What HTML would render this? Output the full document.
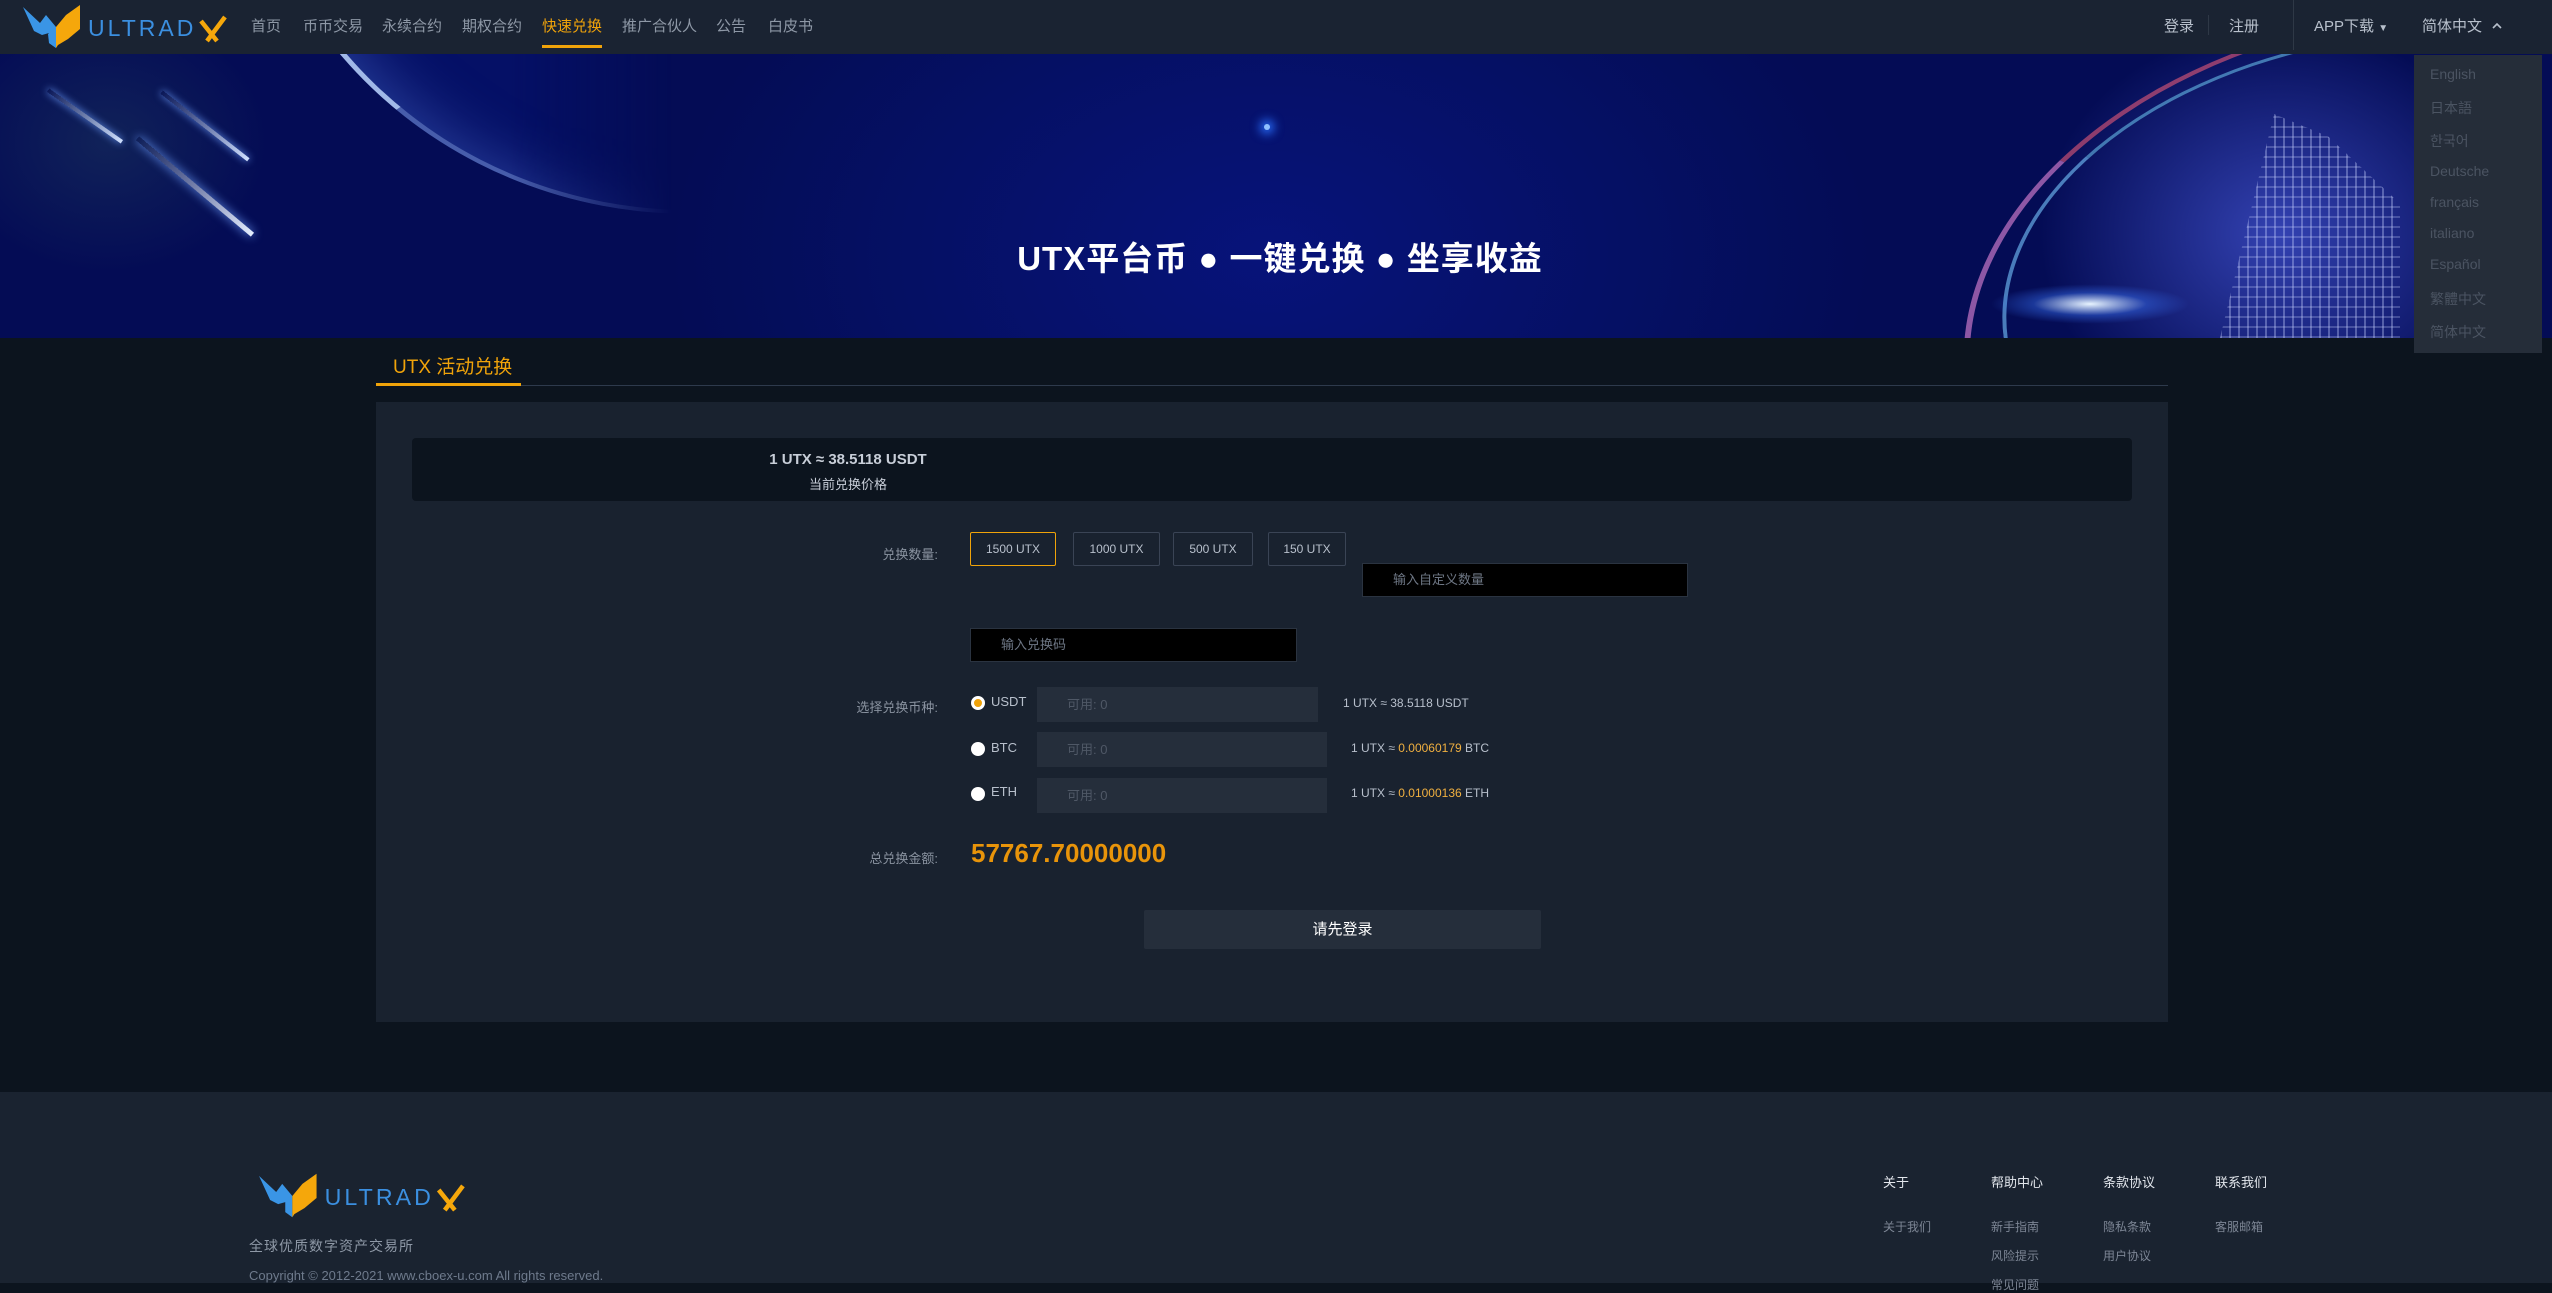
<!DOCTYPE html>
<html><head><meta charset="utf-8">
<style>
*{margin:0;padding:0;box-sizing:border-box}
body{width:2552px;height:1283px;overflow:hidden;background:#0c141e;font-family:"Liberation Sans","Noto Sans CJK SC",sans-serif;position:relative}
.a{position:absolute;white-space:nowrap}
.hdr{position:absolute;left:0;top:0;width:2552px;height:54px;background:#1a2332}
.nav{top:15px;font-size:15px;color:#8e98a6}
.banner{position:absolute;left:0;top:54px;width:2552px;height:284px;overflow:hidden;
background:radial-gradient(ellipse 600px 400px at 1270px 200px,#07137a 0%,#051064 60%,#040c55 100%)}
.dd{position:absolute;left:2414px;top:55px;width:128px;height:298px;background:#252d39}
.dd div{position:absolute;left:16px;font-size:14px;color:#4b5462}
.card{position:absolute;left:376px;top:402px;width:1792px;height:620px;background:#19222f}
.lbl{font-size:13px;color:#8a93a0;text-align:right;width:200px}
.btn{position:absolute;top:532px;height:34px;border:1px solid #3a4455;border-radius:2px;color:#b8c0cc;font-size:12px;text-align:center;line-height:32px}
.inp{position:absolute;background:#000;border:1px solid #2a3340;color:#6e7785;font-size:13px;padding-left:30px}
.av{position:absolute;left:1037px;background:#252e3b;color:#4f5866;font-size:13px;padding-left:30px;line-height:35px;height:35px}
.rad{position:absolute;width:14px;height:14px;border-radius:50%;background:#fff;left:971px}
.cur{font-size:13px;color:#b8c0cc}
.rate{font-size:12px;color:#b8c0cc}
.foot{position:absolute;left:0;top:1092px;width:2552px;height:191px;background:#1a2330}
.fh{font-size:13px;color:#e2e6ec;top:1172px}
.fl{font-size:12px;color:#7d8695}
</style></head><body>
<div class="hdr"></div>
<svg class="a" style="left:22px;top:3px" width="210" height="46" viewBox="0 0 210 46">
<polygon points="1,4 18,20 24,12 34,24 34,45 27,40 27,30 20,32 12,28" fill="#3a95e6"/>
<polygon points="34,24 44,12 58,2 58,26 46,36 36,42 34,45" fill="#f5a70b"/>
<polygon points="26,31 34,24 34,45 27,40" fill="#3a95e6"/>
<text x="66" y="33" font-family="Liberation Sans" font-size="23" fill="#3b8fe0" letter-spacing="3">ULTRAD</text>
<path d="M179 18 L195 38 M203 14 L185 38" stroke="#f5a70b" stroke-width="4.5" fill="none"/>
</svg>
<div class="a nav" style="left:251px">首页</div>
<div class="a nav" style="left:303px">币币交易</div>
<div class="a nav" style="left:382px">永续合约</div>
<div class="a nav" style="left:462px">期权合约</div>
<div class="a nav" style="left:542px;color:#f0a30a">快速兑换</div>
<div class="a" style="left:542px;top:45px;width:60px;height:3px;background:#f0a30a"></div>
<div class="a nav" style="left:622px">推广合伙人</div>
<div class="a nav" style="left:716px">公告</div>
<div class="a nav" style="left:768px">白皮书</div>
<div class="a nav" style="left:2164px;color:#b8c0cc">登录</div>
<div class="a" style="left:2208px;top:15px;width:1px;height:20px;background:#2e3846"></div>
<div class="a nav" style="left:2229px;color:#b8c0cc">注册</div>
<div class="a" style="left:2293px;top:0;width:1px;height:50px;background:#2e3846"></div>
<div class="a nav" style="left:2314px;color:#b8c0cc">APP下载 <span style="font-size:10px">▼</span></div>
<div class="a nav" style="left:2422px;color:#b8c0cc">简体中文</div>
<svg class="a" style="left:2492px;top:22px" width="10" height="8"><path d="M1 6 L5 2 L9 6" stroke="#b8c0cc" stroke-width="1.6" fill="none"/></svg>

<div class="banner">
<div class="a" style="left:240px;top:-700px;width:900px;height:860px;border-radius:50%;border-left:6px solid rgba(190,215,255,.85);border-bottom:4px solid rgba(140,170,240,.5);box-shadow:-18px 6px 30px -6px rgba(100,150,255,.6), inset 30px -10px 60px -20px rgba(90,130,230,.4);background:#051066;-webkit-mask-image:linear-gradient(90deg,#000 0,#000 30%,rgba(0,0,0,0) 48%);mask-image:linear-gradient(90deg,#000 0,#000 30%,rgba(0,0,0,0) 48%)"></div>
<div class="a" style="left:0;top:0;width:270px;height:220px;background:radial-gradient(ellipse at 40% 40%,rgba(20,40,90,.8),rgba(4,12,85,0) 70%)"></div>
<div class="a" style="left:40px;top:60px;width:90px;height:4px;background:linear-gradient(90deg,rgba(120,160,255,0),#cfe0ff);transform:rotate(35deg);box-shadow:0 0 8px #6fa0ff"></div>
<div class="a" style="left:150px;top:70px;width:110px;height:4px;background:linear-gradient(90deg,rgba(120,160,255,0),#cfe0ff);transform:rotate(38deg);box-shadow:0 0 8px #6fa0ff"></div>
<div class="a" style="left:120px;top:130px;width:150px;height:5px;background:linear-gradient(90deg,rgba(120,160,255,0),#e4eeff);transform:rotate(40deg);box-shadow:0 0 10px #6fa0ff"></div>
<div class="a" style="left:1264px;top:70px;width:6px;height:6px;border-radius:50%;background:#8fc0ff;box-shadow:0 0 10px 4px #2a70ff"></div>
<div class="a" style="left:1950px;top:0;width:500px;height:284px;background:radial-gradient(ellipse 300px 260px at 330px 180px,rgba(90,110,255,.55),rgba(4,12,85,0) 80%)"></div>
<div class="a" style="left:1960px;top:-40px;width:900px;height:600px;border-radius:50%;border-left:6px solid rgba(200,120,200,.7);border-top:4px solid rgba(230,90,120,.6);transform:rotate(-10deg)"></div>
<div class="a" style="left:2000px;top:-20px;width:800px;height:500px;border-radius:50%;border-left:4px solid rgba(120,200,255,.6);border-top:3px solid rgba(120,220,255,.5);transform:rotate(-8deg)"></div>
<div class="a" style="left:1990px;top:230px;width:200px;height:40px;border-radius:50%;background:radial-gradient(ellipse,#e8f4ff,rgba(60,120,255,.4) 40%,rgba(4,12,85,0) 70%)"></div>
<div class="a" style="left:2220px;top:60px;width:180px;height:224px;background:repeating-linear-gradient(90deg,rgba(200,210,255,.35) 0 2px,rgba(0,0,0,0) 2px 9px),repeating-linear-gradient(0deg,rgba(200,210,255,.25) 0 2px,rgba(0,0,0,0) 2px 10px);clip-path:polygon(30% 0,60% 10%,100% 40%,100% 100%,0 100%)"></div>
<div class="a" style="left:0;width:100%;text-align:center;top:178px;font-size:33px;font-weight:bold;color:#fff;letter-spacing:1px;padding-left:8px">UTX平台币 ● 一键兑换 ● 坐享收益</div>
</div>

<div class="dd">
<div style="top:11px">English</div><div style="top:43px">日本語</div><div style="top:76px">한국어</div>
<div style="top:108px">Deutsche</div><div style="top:139px">français</div><div style="top:170px">italiano</div>
<div style="top:201px">Español</div><div style="top:234px">繁體中文</div><div style="top:267px">简体中文</div>
</div>

<div class="a" style="left:393px;top:352px;font-size:19px;color:#f0a30a">UTX 活动兑换</div>
<div class="a" style="left:376px;top:385px;width:1792px;height:1px;background:#2e3a4c"></div>
<div class="a" style="left:376px;top:383px;width:145px;height:3px;background:#f0a30a"></div>
<div class="card"></div>
<div class="a" style="left:412px;top:438px;width:1720px;height:63px;background:#0c141e;border-radius:4px"></div>
<div class="a" style="left:648px;top:451px;width:400px;text-align:center;font-size:15px;font-weight:bold;color:#c8ced8">1 UTX ≈ 38.5118 USDT</div>
<div class="a" style="left:648px;top:474px;width:400px;text-align:center;font-size:13px;color:#c8ced8">当前兑换价格</div>

<div class="a lbl" style="left:738px;top:544px">兑换数量:</div>
<div class="btn" style="left:970px;width:86px;border-color:#f0a30a">1500 UTX</div>
<div class="btn" style="left:1073px;width:87px">1000 UTX</div>
<div class="btn" style="left:1173px;width:80px">500 UTX</div>
<div class="btn" style="left:1268px;width:78px">150 UTX</div>
<div class="inp" style="left:1362px;top:563px;width:326px;height:34px;line-height:32px">输入自定义数量</div>
<div class="inp" style="left:970px;top:628px;width:327px;height:34px;line-height:32px">输入兑换码</div>

<div class="a lbl" style="left:738px;top:697px">选择兑换币种:</div>
<div class="rad" style="top:696px;background:#f0a30a;border:3px solid #fff"></div>
<div class="a cur" style="left:991px;top:694px">USDT</div>
<div class="av" style="top:687px;width:281px">可用: 0</div>
<div class="a rate" style="left:1343px;top:696px">1 UTX ≈ 38.5118 USDT</div>
<div class="rad" style="top:742px"></div>
<div class="a cur" style="left:991px;top:740px">BTC</div>
<div class="av" style="top:732px;width:290px">可用: 0</div>
<div class="a rate" style="left:1351px;top:741px">1 UTX ≈ <span style="color:#f0b040">0.00060179</span> BTC</div>
<div class="rad" style="top:787px"></div>
<div class="a cur" style="left:991px;top:784px">ETH</div>
<div class="av" style="top:778px;width:290px">可用: 0</div>
<div class="a rate" style="left:1351px;top:786px">1 UTX ≈ <span style="color:#f0b040">0.01000136</span> ETH</div>

<div class="a lbl" style="left:738px;top:848px">总兑换金额:</div>
<div class="a" style="left:971px;top:838px;font-size:26px;font-weight:bold;color:#e8940a">57767.70000000</div>
<div class="a" style="left:1144px;top:910px;width:397px;height:39px;background:#252e3b;border-radius:2px;color:#fff;font-size:15px;text-align:center;line-height:39px">请先登录</div>

<div class="foot"></div>
<svg class="a" style="left:258px;top:1168px" width="212" height="54" viewBox="0 0 210 46">
<polygon points="1,4 18,20 24,12 34,24 34,45 27,40 27,30 20,32 12,28" fill="#3a95e6"/>
<polygon points="34,24 44,12 58,2 58,26 46,36 36,42 34,45" fill="#f5a70b"/>
<text x="66" y="33" font-family="Liberation Sans" font-size="23" fill="#3b8fe0" letter-spacing="3">ULTRAD</text>
<path d="M179 18 L195 38 M203 14 L185 38" stroke="#f5a70b" stroke-width="4.5" fill="none"/>
</svg>
<div class="a" style="left:249px;top:1236px;font-size:14px;color:#8e98a6;letter-spacing:1px">全球优质数字资产交易所</div>
<div class="a" style="left:249px;top:1268px;font-size:13px;color:#6e7a8c">Copyright © 2012-2021 www.cboex-u.com All rights reserved.</div>
<div class="a fh" style="left:1883px">关于</div>
<div class="a fh" style="left:1991px">帮助中心</div>
<div class="a fh" style="left:2103px">条款协议</div>
<div class="a fh" style="left:2215px">联系我们</div>
<div class="a fl" style="left:1883px;top:1218px">关于我们</div>
<div class="a fl" style="left:1991px;top:1218px">新手指南</div>
<div class="a fl" style="left:2103px;top:1218px">隐私条款</div>
<div class="a fl" style="left:2215px;top:1218px">客服邮箱</div>
<div class="a fl" style="left:1991px;top:1247px">风险提示</div>
<div class="a fl" style="left:2103px;top:1247px">用户协议</div>
<div class="a fl" style="left:1991px;top:1276px">常见问题</div>
</body></html>
